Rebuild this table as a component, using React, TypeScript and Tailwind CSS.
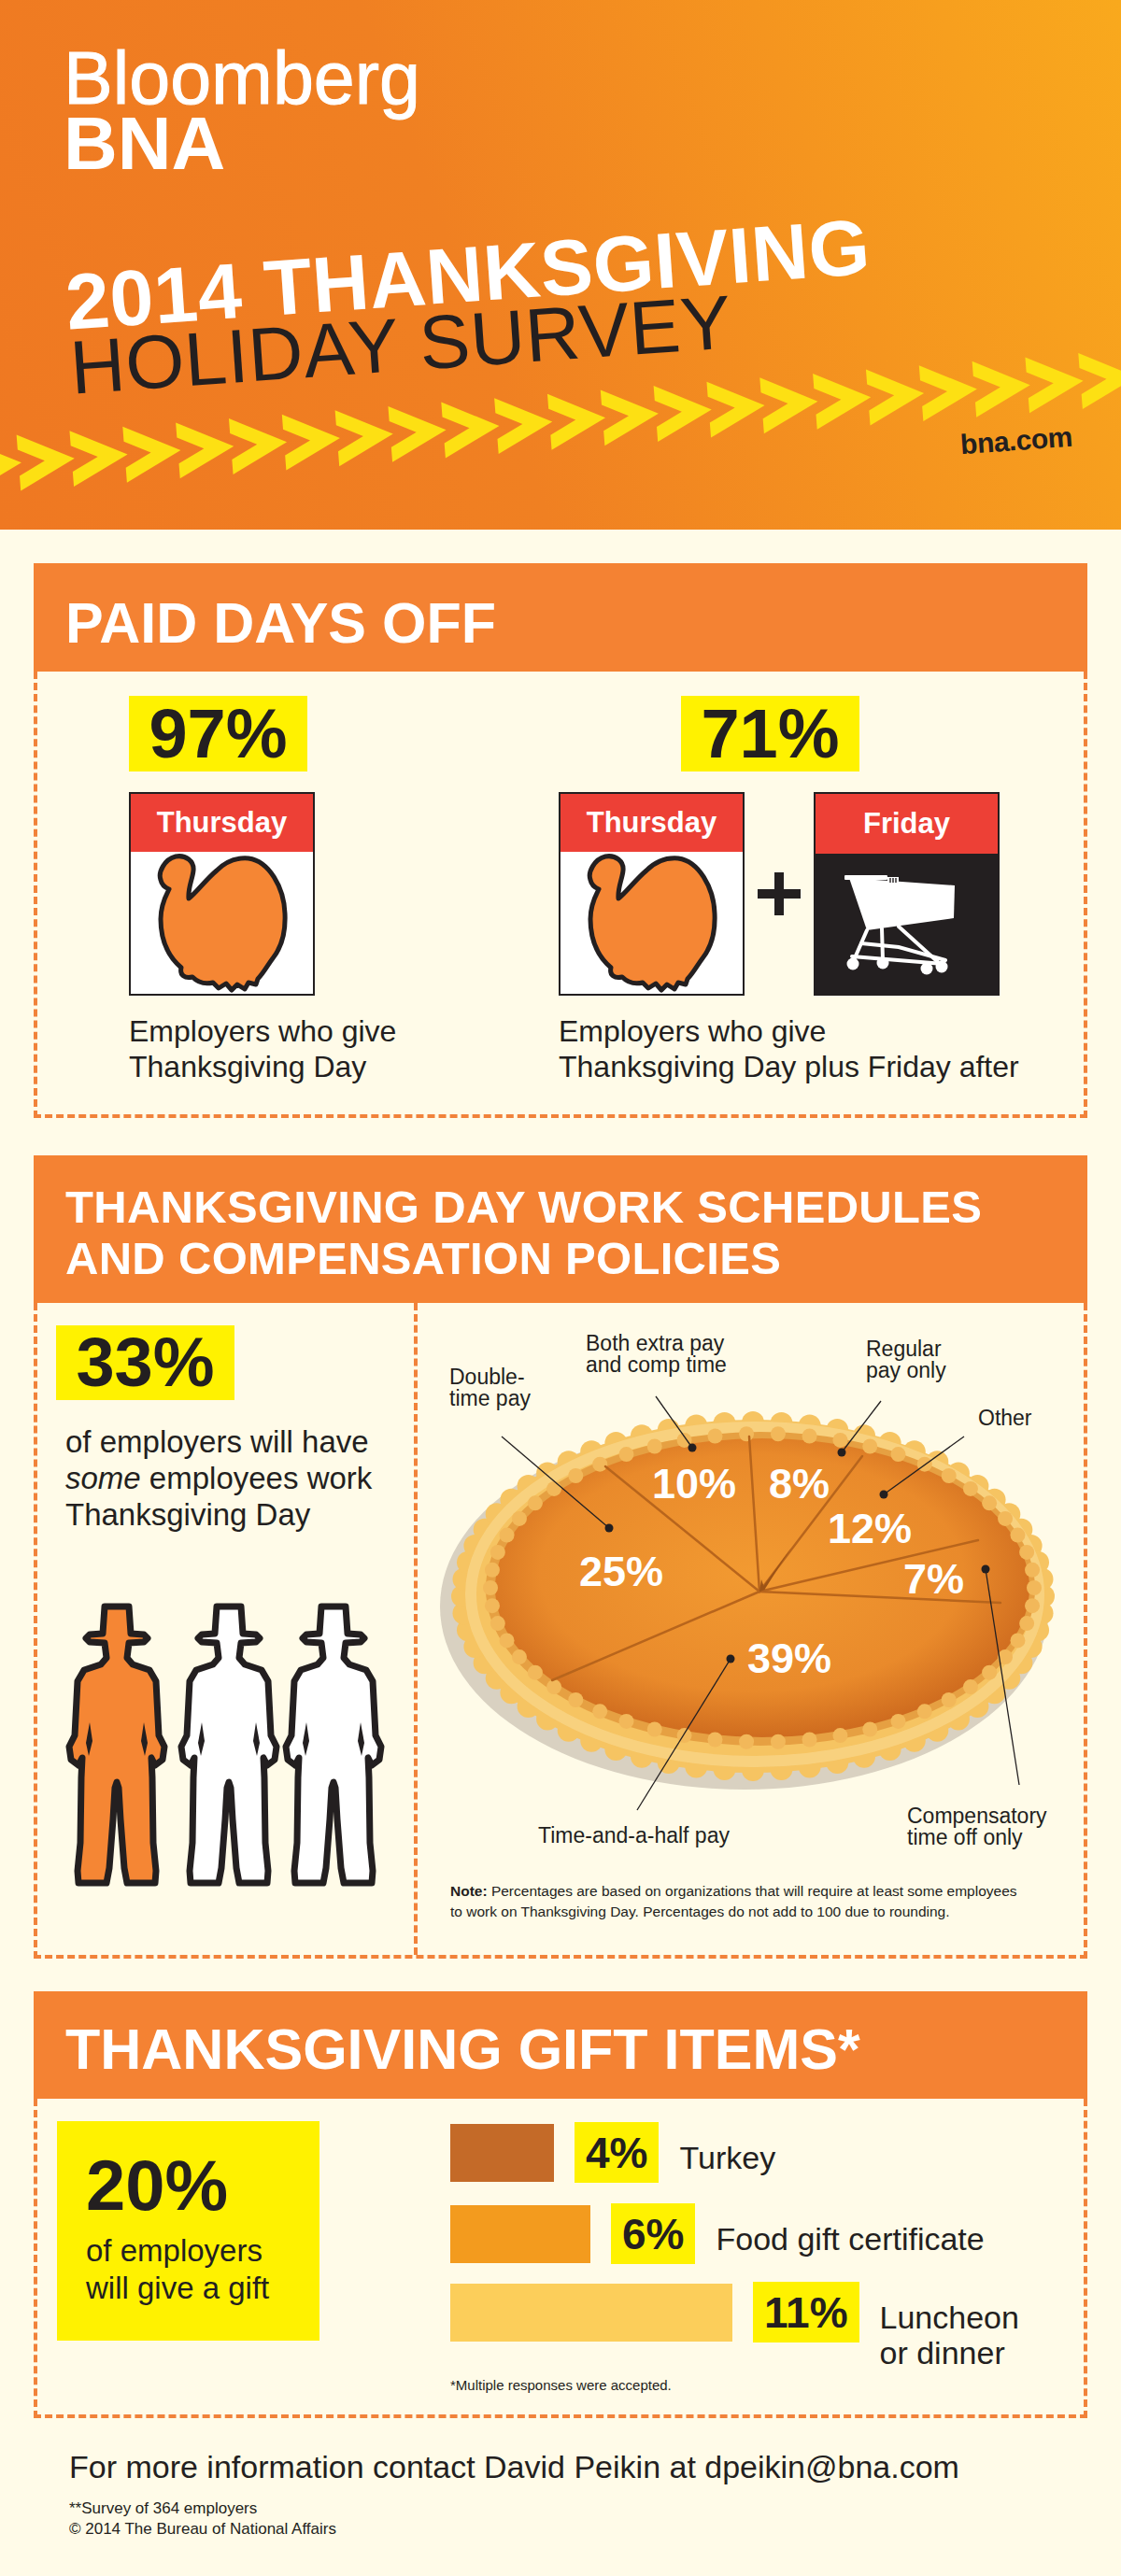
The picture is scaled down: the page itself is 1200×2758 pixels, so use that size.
import React from "react";

const FONT = "'Liberation Sans', Arial, sans-serif";

// header chevron band ">>>>"
const Chevrons = () => (
  <svg
    className="pointer-events-none absolute left-0 top-0"
    width="1200"
    height="567"
    viewBox="0 0 1200 567"
  >
    <g transform="rotate(-4.4 0 497)" fill="#fde013">
      {Array.from({ length: 23 }).map((_, i) => {
        const x = -37 + i * 57;
        return (
          <polygon
            key={i}
            points={`${x},467 ${x + 60},497 ${x},527 ${x},511 ${x + 28},497 ${x},483`}
          />
        );
      })}
    </g>
  </svg>
);

const Turkey = () => (
  <svg width="142" height="152" viewBox="0 0 142 152">
    <path
      d="M 6 30 C 3 22, 10 8, 22 5 C 33 3, 42 10, 41 20 C 40 30, 35 38, 36 50 C 44 44, 54 30, 66 20 C 76 10, 88 6, 100 7 C 122 10, 138 38, 139 66 C 140 88, 134 104, 126 114 C 120 122, 116 130, 110 136 L 108 142 L 100 140 L 96 147 L 88 142 L 82 148 L 76 141 L 68 146 L 62 140 C 54 142, 46 140, 40 134 C 32 136, 26 132, 28 124 C 14 112, 6 94, 6 72 C 6 56, 12 46, 15 40 C 10 38, 7 35, 6 30 Z"
      fill="#f58634"
      stroke="#231f20"
      strokeWidth="5"
      strokeLinejoin="round"
    />
  </svg>
);

const Cart = () => (
  <svg width="126" height="110" viewBox="0 0 126 110">
    <g fill="#fff">
      <rect x="0" y="1" width="46" height="5" rx="1" />
      <rect x="46" y="3" width="12" height="7" />
      <polygon points="5,4 118,12 117,47 24,60" />
      <circle cx="9" cy="96" r="6.5" />
      <circle cx="41" cy="95" r="6.5" />
      <circle cx="88" cy="101" r="6.5" />
      <circle cx="104" cy="99" r="6.5" />
    </g>
    <g stroke="#fff" strokeWidth="4" fill="none" strokeLinecap="round">
      <polyline points="24,60 10,92" />
      <polyline points="40,58 41,92" />
      <polyline points="58,56 100,94" />
      <polyline points="8,88 106,96" />
      <polyline points="18,74 58,78 108,92" />
    </g>
    <g stroke="#231f20" strokeWidth="1.4">
      <line x1="49" y1="4" x2="49" y2="9" />
      <line x1="52" y1="4" x2="52" y2="9" />
      <line x1="55" y1="4" x2="55" y2="9" />
    </g>
  </svg>
);

const Plus = () => (
  <svg width="46" height="46" viewBox="0 0 46 46">
    <rect x="18" y="0" width="10" height="46" fill="#231f20" />
    <rect x="0" y="18" width="46" height="10" fill="#231f20" />
  </svg>
);

// right half of a pilgrim outline, mirrored for the left half
const HALF: [number, number][] = [
  [55, 2], [68, 2], [70, 31], [84, 32], [88, 36], [84, 40], [68, 41],
  [66, 57], [72, 64], [90, 70], [97, 82], [100, 140], [106, 152],
  [104, 166], [96, 172], [92, 164], [93, 185], [94, 255], [97, 285],
  [96, 298], [66, 298], [63, 282], [59, 230], [57, 196], [55, 190],
];

const pilgrimPath = (() => {
  const right = HALF.map(([x, y]) => `${x} ${y}`);
  const left = [...HALF].reverse().map(([x, y]) => `${110 - x} ${y}`);
  return `M ${right.join(" L ")} L ${left.join(" L ")} Z`;
})();

const Pilgrims = () => (
  <svg width="346" height="306" viewBox="0 0 346 306">
    {[
      { x: 0, fill: "#f58634" },
      { x: 120, fill: "#ffffff" },
      { x: 232, fill: "#ffffff" },
    ].map((p) => (
      <g key={p.x} transform={`translate(${p.x + 1} 3)`}>
        <path
          d={pilgrimPath}
          fill={p.fill}
          stroke="#231f20"
          strokeWidth="7"
          strokeLinejoin="round"
        />
        <polygon points="84,126 88,148 85,162 81,146" fill="#231f20" />
        <polygon points="26,126 22,148 25,162 29,146" fill="#231f20" />
      </g>
    ))}
  </svg>
);

function PieChart() {
  const scallops = Array.from({ length: 64 }, (_, k) => {
    const a = (2 * Math.PI * k) / 64;
    return [359 + 311 * Math.cos(a), 314 + 186 * Math.sin(a)];
  });
  const crimps = Array.from({ length: 54 }, (_, k) => {
    const a = (2 * Math.PI * k) / 54;
    return [369 + 291 * Math.cos(a), 305 + 165 * Math.sin(a)];
  });
  const center = [366, 309];
  const cuts = [
    [201, 175],
    [355, 143],
    [476, 164],
    [600, 254],
    [624, 321],
    [144, 404],
  ];
  const pcts = [
    { t: "10%", x: 251, y: 209 },
    { t: "8%", x: 376, y: 209 },
    { t: "12%", x: 439, y: 257 },
    { t: "7%", x: 520, y: 311 },
    { t: "25%", x: 173, y: 303 },
    { t: "39%", x: 353, y: 396 },
  ];
  const leaders = [
    [90, 143, 205, 241],
    [255, 100, 294, 155],
    [496, 105, 454, 160],
    [585, 143, 499, 205],
    [644, 516, 608, 285],
    [235, 543, 335, 381],
  ];
  const labels = [
    { x: 34, lines: ["Double-", "time pay"], y: 87 },
    { x: 180, lines: ["Both extra pay", "and comp time"], y: 51 },
    { x: 480, lines: ["Regular", "pay only"], y: 57 },
    { x: 600, lines: ["Other"], y: 131 },
    { x: 129, lines: ["Time-and-a-half pay"], y: 578 },
    { x: 524, lines: ["Compensatory", "time off only"], y: 557 },
  ];

  return (
    <svg width="712" height="600" viewBox="0 0 712 600">
      <defs>
        <radialGradient id="filling" cx="48%" cy="45%" r="55%">
          <stop offset="0%" stopColor="#f29a31" />
          <stop offset="72%" stopColor="#e98a2b" />
          <stop offset="100%" stopColor="#cf6c1f" />
        </radialGradient>
      </defs>

      <ellipse cx="350" cy="325" rx="326" ry="196" fill="#d9d1c1" />
      <ellipse cx="359" cy="314" rx="316" ry="189" fill="#f6c462" />
      {scallops.map(([x, y], i) => (
        <circle key={i} cx={x} cy={y} r="12" fill="#f6c462" />
      ))}
      <ellipse
        cx="361"
        cy="312"
        rx="304"
        ry="179"
        fill="none"
        stroke="#f9d486"
        strokeWidth="12"
        opacity="0.8"
      />
      <ellipse cx="367" cy="306" rx="294" ry="168" fill="#e6a042" />
      <ellipse cx="369" cy="305" rx="286" ry="160" fill="url(#filling)" />
      {crimps.map(([x, y], i) => (
        <circle key={i} cx={x} cy={y} r="8" fill="#f2b85a" />
      ))}

      <g stroke="#b8651c" strokeWidth="2.5" strokeLinecap="round">
        {cuts.map(([x, y], i) => (
          <line key={i} x1={center[0]} y1={center[1]} x2={x} y2={y} />
        ))}
      </g>
      <polygon points="366,309 400,262 372,306" fill="#9c5316" />
      <polygon points="366,309 368,296 372,307" fill="#9c5316" />

      <g fontFamily={FONT} fontWeight="700" fontSize="45" fill="#ffffff">
        {pcts.map((p) => (
          <text key={p.t} x={p.x} y={p.y}>
            {p.t}
          </text>
        ))}
      </g>

      <g stroke="#231f20" strokeWidth="1.3">
        {leaders.map(([x1, y1, x2, y2], i) => (
          <line key={i} x1={x1} y1={y1} x2={x2} y2={y2} />
        ))}
      </g>
      <g fill="#231f20">
        {leaders.map(([, , x2, y2], i) => (
          <circle key={i} cx={x2} cy={y2} r="4.5" />
        ))}
      </g>

      <g fontFamily={FONT} fontSize="23" fill="#231f20">
        {labels.map((l) => (
          <text key={l.lines[0]} x={l.x} y={l.y}>
            {l.lines.map((line, j) => (
              <tspan key={line} x={l.x} dy={j === 0 ? 0 : 23}>
                {line}
              </tspan>
            ))}
          </text>
        ))}
      </g>
    </svg>
  );
}

const Pct = ({ value, tall = false }: { value: string; tall?: boolean }) => (
  <div
    className={`flex w-[191px] items-center justify-center bg-[#fff200] text-[74px] font-bold leading-none text-[#231f20] ${
      tall ? "h-[81px]" : "h-[80px]"
    }`}
  >
    {value}
  </div>
);

const DayCard = ({
  label,
  dark = false,
  children,
}: {
  label: string;
  dark?: boolean;
  children: React.ReactNode;
}) => (
  <div
    className={`flex h-[218px] w-[199px] flex-col border-2 border-[#231f20] ${
      dark ? "bg-[#231f20]" : "bg-white"
    }`}
  >
    <div className="flex h-[64px] items-center justify-center bg-[#ed4036] text-[31px] font-bold text-white">
      {label}
    </div>
    <div className="flex-1">{children}</div>
  </div>
);

const BarRow = ({
  bar,
  width,
  value,
  label,
}: {
  bar: string;
  width: string;
  value: string;
  label: React.ReactNode;
}) => (
  <div className="flex items-start gap-[22px]">
    <div className={`mt-[2px] h-[62px] ${width} ${bar}`} />
    <div className="flex h-[65px] items-center bg-[#fff200] px-[12px] text-[46px] font-bold leading-none">
      {value}
    </div>
    <p className="pt-[19px] text-[34px] leading-[38px]">{label}</p>
  </div>
);

export default function App() {
  return (
    <div className="min-h-[2758px] w-[1200px] bg-[#fffbe8] font-['Liberation_Sans',Arial,sans-serif] text-[#231f20]">
      {/* Header */}
      <header className="relative h-[567px] overflow-hidden bg-[linear-gradient(250deg,#f9a91d_0%,#f5951f_28%,#f08022_58%,#ef7822_100%)] pl-[68px] pt-[49px]">
        <Chevrons />
        <div className="relative text-white">
          <div className="text-[79px] leading-[70px] [-webkit-text-stroke:1px_#fff]">Bloomberg</div>
          <div className="text-[80px] font-bold leading-[70px]">BNA</div>
        </div>
        <div className="relative mt-[100px] origin-top-left -rotate-[4deg] leading-[70px]">
          <div className="text-[84px] font-bold tracking-[0.5px] text-white">2014 THANKSGIVING</div>
          <div className="text-[81px] tracking-[0.5px] text-[#231f20]">HOLIDAY SURVEY</div>
        </div>
        <div className="relative mt-[28px] flex justify-end pr-[52px]">
          <span className="-rotate-[4deg] text-[30px] font-bold leading-none tracking-[-0.5px] text-[#231f20]">
            bna.com
          </span>
        </div>
      </header>

      {/* Paid days off */}
      <section className="mx-[36px] mt-[36px]">
        <div className="h-[116px] bg-[#f48233] pl-[34px] pt-[34px]">
          <h2 className="text-[61px] font-bold leading-none text-white">PAID DAYS OFF</h2>
        </div>
        <div className="flex h-[478px] border-[4px] border-t-0 border-dashed border-[#f1823a] pl-[98px] pt-[26px]">
          <div className="w-[460px]">
            <Pct value="97%" tall />
            <div className="mt-[22px]">
              <DayCard label="Thursday">
                <div className="pl-[26px]">
                  <Turkey />
                </div>
              </DayCard>
            </div>
            <p className="mt-[19px] text-[32px] leading-[38px]">
              Employers who give
              <br />
              Thanksgiving Day
            </p>
          </div>
          <div>
            <div className="ml-[131px]">
              <Pct value="71%" tall />
            </div>
            <div className="mt-[22px] flex items-center gap-[14px]">
              <DayCard label="Thursday">
                <div className="pl-[26px]">
                  <Turkey />
                </div>
              </DayCard>
              <Plus />
              <DayCard label="Friday" dark>
                <div className="pl-[31px] pt-[22px]">
                  <Cart />
                </div>
              </DayCard>
            </div>
            <p className="mt-[19px] text-[32px] leading-[38px]">
              Employers who give
              <br />
              Thanksgiving Day plus Friday after
            </p>
          </div>
        </div>
      </section>

      {/* Work schedules */}
      <section className="mx-[36px] mt-[40px]">
        <div className="h-[158px] bg-[#f48233] pl-[34px] pt-[28px]">
          <h2 className="text-[49px] font-bold leading-[55px] tracking-[0.3px] text-white">
            THANKSGIVING DAY WORK SCHEDULES
            <br />
            AND COMPENSATION POLICIES
          </h2>
        </div>
        <div className="flex h-[702px] border-[4px] border-t-0 border-dashed border-[#f1823a]">
          <div className="w-[407px] border-r-[4px] border-dashed border-[#f1823a] pl-[20px] pt-[24px]">
            <Pct value="33%" />
            <p className="ml-[10px] mt-[25px] text-[33px] leading-[39px]">
              of employers will have
              <br />
              <em>some</em> employees work
              <br />
              Thanksgiving Day
            </p>
            <div className="ml-[9px] mt-[74px]">
              <Pilgrims />
            </div>
          </div>
          <div className="flex-1">
            <PieChart />
            <p className="ml-[35px] mt-[19px] text-[15.5px] leading-[22px]">
              <b>Note:</b> Percentages are based on organizations that will require at least some employees
              <br />
              to work on Thanksgiving Day. Percentages do not add to 100 due to rounding.
            </p>
          </div>
        </div>
      </section>

      {/* Gift items */}
      <section className="mx-[36px] mt-[35px]">
        <div className="h-[115px] bg-[#f48233] pl-[34px] pt-[32px]">
          <h2 className="text-[61px] font-bold leading-none text-white">THANKSGIVING GIFT ITEMS*</h2>
        </div>
        <div className="flex h-[342px] border-[4px] border-t-0 border-dashed border-[#f1823a] pl-[21px] pt-[24px]">
          <div className="h-[235px] w-[281px] bg-[#fff200] pl-[31px] pt-[31px]">
            <div className="text-[76px] font-bold leading-none">20%</div>
            <p className="mt-[12px] text-[33px] leading-[40px]">
              of employers
              <br />
              will give a gift
            </p>
          </div>
          <div className="ml-[140px] pt-[1px]">
            <BarRow bar="bg-[#c46a28]" width="w-[111px]" value="4%" label="Turkey" />
            <div className="mt-[22px]">
              <BarRow bar="bg-[#f39b1e]" width="w-[150px]" value="6%" label="Food gift certificate" />
            </div>
            <div className="mt-[19px]">
              <BarRow
                bar="bg-[#fcce5a]"
                width="w-[302px]"
                value="11%"
                label={
                  <>
                    Luncheon
                    <br />
                    or dinner
                  </>
                }
              />
            </div>
            <p className="mt-[6px] text-[15px] leading-[20px]">*Multiple responses were accepted.</p>
          </div>
        </div>
      </section>

      {/* Footer */}
      <footer className="pl-[74px] pt-[32px]">
        <p className="text-[34px] leading-[40px]">
          For more information contact David Peikin at dpeikin@bna.com
        </p>
        <p className="mt-[14px] text-[17px] leading-[22px]">
          **Survey of 364 employers
          <br />© 2014 The Bureau of National Affairs
        </p>
      </footer>
    </div>
  );
}
